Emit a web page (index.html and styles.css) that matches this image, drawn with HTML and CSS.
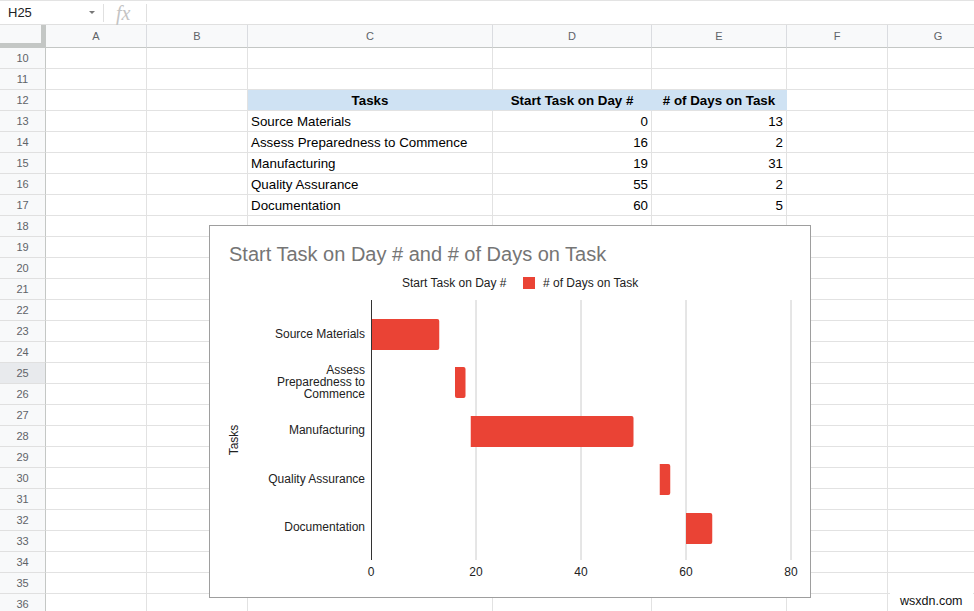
FILE: index.html
```html
<!DOCTYPE html>
<html>
<head>
<meta charset="utf-8">
<title>Sheet</title>
<link rel="stylesheet" href="styles.css">
</head>
<body>
<div class="fbar">
  <div class="namebox"><span class="ref">H25</span><span class="caret"></span></div>
  <div class="sep"></div>
  <div class="fx">fx</div>
  <div class="sep"></div>
  <div class="finput"></div>
</div>
<div class="sheet">
  <div class="row head"><div class="corner"></div><div class="ch">A</div><div class="ch">B</div><div class="ch">C</div><div class="ch">D</div><div class="ch">E</div><div class="ch">F</div><div class="ch">G</div></div>
  <div class="row"><div class="rh">10</div><div class="c"></div><div class="c"></div><div class="c"></div><div class="c"></div><div class="c"></div><div class="c"></div><div class="c"></div></div>
  <div class="row"><div class="rh">11</div><div class="c"></div><div class="c"></div><div class="c"></div><div class="c"></div><div class="c"></div><div class="c"></div><div class="c"></div></div>
  <div class="row"><div class="rh">12</div><div class="c"></div><div class="c"></div><div class="c th">Tasks</div><div class="c th">Start Task on Day #</div><div class="c th">#&nbsp;of Days on Task</div><div class="c"></div><div class="c"></div></div>
  <div class="row"><div class="rh">13</div><div class="c"></div><div class="c"></div><div class="c">Source Materials</div><div class="c num">0</div><div class="c num">13</div><div class="c"></div><div class="c"></div></div>
  <div class="row"><div class="rh">14</div><div class="c"></div><div class="c"></div><div class="c">Assess Preparedness to Commence</div><div class="c num">16</div><div class="c num">2</div><div class="c"></div><div class="c"></div></div>
  <div class="row"><div class="rh">15</div><div class="c"></div><div class="c"></div><div class="c">Manufacturing</div><div class="c num">19</div><div class="c num">31</div><div class="c"></div><div class="c"></div></div>
  <div class="row"><div class="rh">16</div><div class="c"></div><div class="c"></div><div class="c">Quality Assurance</div><div class="c num">55</div><div class="c num">2</div><div class="c"></div><div class="c"></div></div>
  <div class="row"><div class="rh">17</div><div class="c"></div><div class="c"></div><div class="c">Documentation</div><div class="c num">60</div><div class="c num">5</div><div class="c"></div><div class="c"></div></div>
  <div class="row"><div class="rh">18</div><div class="c"></div><div class="c"></div><div class="c"></div><div class="c"></div><div class="c"></div><div class="c"></div><div class="c"></div></div>
  <div class="row"><div class="rh">19</div><div class="c"></div><div class="c"></div><div class="c"></div><div class="c"></div><div class="c"></div><div class="c"></div><div class="c"></div></div>
  <div class="row"><div class="rh">20</div><div class="c"></div><div class="c"></div><div class="c"></div><div class="c"></div><div class="c"></div><div class="c"></div><div class="c"></div></div>
  <div class="row"><div class="rh">21</div><div class="c"></div><div class="c"></div><div class="c"></div><div class="c"></div><div class="c"></div><div class="c"></div><div class="c"></div></div>
  <div class="row"><div class="rh">22</div><div class="c"></div><div class="c"></div><div class="c"></div><div class="c"></div><div class="c"></div><div class="c"></div><div class="c"></div></div>
  <div class="row"><div class="rh">23</div><div class="c"></div><div class="c"></div><div class="c"></div><div class="c"></div><div class="c"></div><div class="c"></div><div class="c"></div></div>
  <div class="row"><div class="rh">24</div><div class="c"></div><div class="c"></div><div class="c"></div><div class="c"></div><div class="c"></div><div class="c"></div><div class="c"></div></div>
  <div class="row"><div class="rh active">25</div><div class="c"></div><div class="c"></div><div class="c"></div><div class="c"></div><div class="c"></div><div class="c"></div><div class="c"></div></div>
  <div class="row"><div class="rh">26</div><div class="c"></div><div class="c"></div><div class="c"></div><div class="c"></div><div class="c"></div><div class="c"></div><div class="c"></div></div>
  <div class="row"><div class="rh">27</div><div class="c"></div><div class="c"></div><div class="c"></div><div class="c"></div><div class="c"></div><div class="c"></div><div class="c"></div></div>
  <div class="row"><div class="rh">28</div><div class="c"></div><div class="c"></div><div class="c"></div><div class="c"></div><div class="c"></div><div class="c"></div><div class="c"></div></div>
  <div class="row"><div class="rh">29</div><div class="c"></div><div class="c"></div><div class="c"></div><div class="c"></div><div class="c"></div><div class="c"></div><div class="c"></div></div>
  <div class="row"><div class="rh">30</div><div class="c"></div><div class="c"></div><div class="c"></div><div class="c"></div><div class="c"></div><div class="c"></div><div class="c"></div></div>
  <div class="row"><div class="rh">31</div><div class="c"></div><div class="c"></div><div class="c"></div><div class="c"></div><div class="c"></div><div class="c"></div><div class="c"></div></div>
  <div class="row"><div class="rh">32</div><div class="c"></div><div class="c"></div><div class="c"></div><div class="c"></div><div class="c"></div><div class="c"></div><div class="c"></div></div>
  <div class="row"><div class="rh">33</div><div class="c"></div><div class="c"></div><div class="c"></div><div class="c"></div><div class="c"></div><div class="c"></div><div class="c"></div></div>
  <div class="row"><div class="rh">34</div><div class="c"></div><div class="c"></div><div class="c"></div><div class="c"></div><div class="c"></div><div class="c"></div><div class="c"></div></div>
  <div class="row"><div class="rh">35</div><div class="c"></div><div class="c"></div><div class="c"></div><div class="c"></div><div class="c"></div><div class="c"></div><div class="c"></div></div>
  <div class="row"><div class="rh">36</div><div class="c"></div><div class="c"></div><div class="c"></div><div class="c"></div><div class="c"></div><div class="c"></div><div class="c"></div></div>
</div>

<div class="chart">
  <svg class="chart-svg" width="600" height="371" viewBox="0 0 600 371">
    <text class="title" x="19" y="35">Start Task on Day # and # of Days on Task</text>
    <text class="lbl" x="192" y="61">Start Task on Day #</text>
    <rect class="bar" x="313" y="51" width="12" height="12"/>
    <text class="lbl" x="333" y="61"># of Days on Task</text>

    <line class="grid" x1="266" y1="74" x2="266" y2="334"/>
    <line class="grid" x1="371" y1="74" x2="371" y2="334"/>
    <line class="grid" x1="476" y1="74" x2="476" y2="334"/>
    <line class="grid" x1="581" y1="74" x2="581" y2="334"/>

    <path class="bar" d="M161 93 H227.25 A2 2 0 0 1 229.25 95 V122 A2 2 0 0 1 227.25 124 H161 Z"/>
    <path class="bar" d="M245 141 H253.5 A2 2 0 0 1 255.5 143 V170 A2 2 0 0 1 253.5 172 H247 A2 2 0 0 1 245 170 Z"/>
    <path class="bar" d="M260.75 190 H421.5 A2 2 0 0 1 423.5 192 V219 A2 2 0 0 1 421.5 221 H260.75 Z"/>
    <path class="bar" d="M449.75 238 H458.25 A2 2 0 0 1 460.25 240 V267 A2 2 0 0 1 458.25 269 H449.75 Z"/>
    <path class="bar" d="M476 287 H500.25 A2 2 0 0 1 502.25 289 V316 A2 2 0 0 1 500.25 318 H476 Z"/>

    <line class="axis" x1="161.5" y1="74" x2="161.5" y2="334"/>

    <text class="lbl end" x="155" y="112">Source Materials</text>
    <text class="lbl end" x="155" y="148">Assess</text>
    <text class="lbl end" x="155" y="160">Preparedness to</text>
    <text class="lbl end" x="155" y="172">Commence</text>
    <text class="lbl end" x="155" y="208">Manufacturing</text>
    <text class="lbl end" x="155" y="257">Quality Assurance</text>
    <text class="lbl end" x="155" y="305">Documentation</text>

    <text class="lbl mid" x="161" y="350">0</text>
    <text class="lbl mid" x="266" y="350">20</text>
    <text class="lbl mid" x="371" y="350">40</text>
    <text class="lbl mid" x="476" y="350">60</text>
    <text class="lbl mid" x="581" y="350">80</text>

    <text class="lbl mid" transform="translate(28 214) rotate(-90)">Tasks</text>
  </svg>
</div>

<div class="watermark">wsxdn.com</div>
</body>
</html>
```
FILE: styles.css
```css
* {
  box-sizing: border-box;
  margin: 0;
  padding: 0;
}

html, body {
  width: 974px;
  height: 611px;
  overflow: hidden;
  background: #fff;
}

body {
  position: relative;
  font-family: "Liberation Sans", Arial, sans-serif;
  color: #000;
}

/* formula bar */
.fbar {
  height: 25px;
  display: flex;
  align-items: center;
  border-top: 1px solid #e3e3e3;
  border-bottom: 1px solid #e0e0e0;
}

.namebox {
  width: 103px;
  height: 100%;
  display: flex;
  align-items: center;
  padding-left: 8px;
  padding-right: 8px;
  font-size: 13px;
  color: #202124;
}

.ref {
  flex: 1;
}

.caret {
  width: 0;
  height: 0;
  border-left: 3px solid transparent;
  border-right: 3px solid transparent;
  border-top: 3px solid #777;
}

.sep {
  width: 1px;
  height: 18px;
  background: #e0e0e0;
}

.fx {
  width: 42px;
  padding-left: 12px;
  font-family: "Liberation Serif", "DejaVu Serif", serif;
  font-style: italic;
  font-size: 20px;
  line-height: 22px;
  color: #c4c4c4;
}

.finput {
  flex: 1;
}

/* sheet grid */
.sheet {
  width: 974px;
  overflow: hidden;
}

.row {
  display: grid;
  grid-template-columns: 46px 101px 101px 245px 159px 135px 101px 101px;
  height: 21px;
}

.row.head {
  height: 23px;
}

.corner {
  background: #f8f9fa;
  border-right: 5px solid #c4c7c5;
  border-bottom: 5px solid #c4c7c5;
}

.ch {
  background: #f8f9fa;
  border-right: 1px solid #dadce0;
  border-bottom: 1px solid #c4c7c5;
  font-size: 11px;
  color: #5f6368;
  text-align: center;
  line-height: 22px;
}

.rh {
  background: #f8f9fa;
  border-right: 1px solid #c4c7c5;
  border-bottom: 1px solid #e0e0e0;
  font-size: 11px;
  color: #5f6368;
  text-align: center;
  line-height: 20px;
}

.rh.active {
  background: #e8eaed;
}

.c {
  border-right: 1px solid #e2e2e2;
  border-bottom: 1px solid #e2e2e2;
  font-size: 13.33px;
  line-height: 22px;
  padding: 0 3px;
  white-space: nowrap;
  overflow: hidden;
}

.c.num {
  text-align: right;
  padding-right: 3px;
}

.c.th {
  background: #cfe2f3;
  border-right-color: #cfe2f3;
  font-weight: bold;
  text-align: center;
}

/* floating chart */
.chart {
  position: absolute;
  left: 209px;
  top: 225px;
  width: 602px;
  height: 373px;
  border: 1px solid #9e9e9e;
  background: #fff;
}

.chart-svg {
  display: block;
  font-family: "Liberation Sans", Arial, sans-serif;
}

.title {
  font-size: 20px;
  fill: #757575;
}

.lbl {
  font-size: 12px;
  fill: #222;
}

.end {
  text-anchor: end;
}

.mid {
  text-anchor: middle;
}

.grid {
  stroke: #cccccc;
  stroke-width: 1;
}

.axis {
  stroke: #333;
  stroke-width: 1;
}

.bar {
  fill: #ea4335;
}

.watermark {
  position: absolute;
  left: 890px;
  top: 593px;
  padding: 1px 10px 1px 10px;
  background: #fff;
  font-size: 12.5px;
  color: #111;
}
```
